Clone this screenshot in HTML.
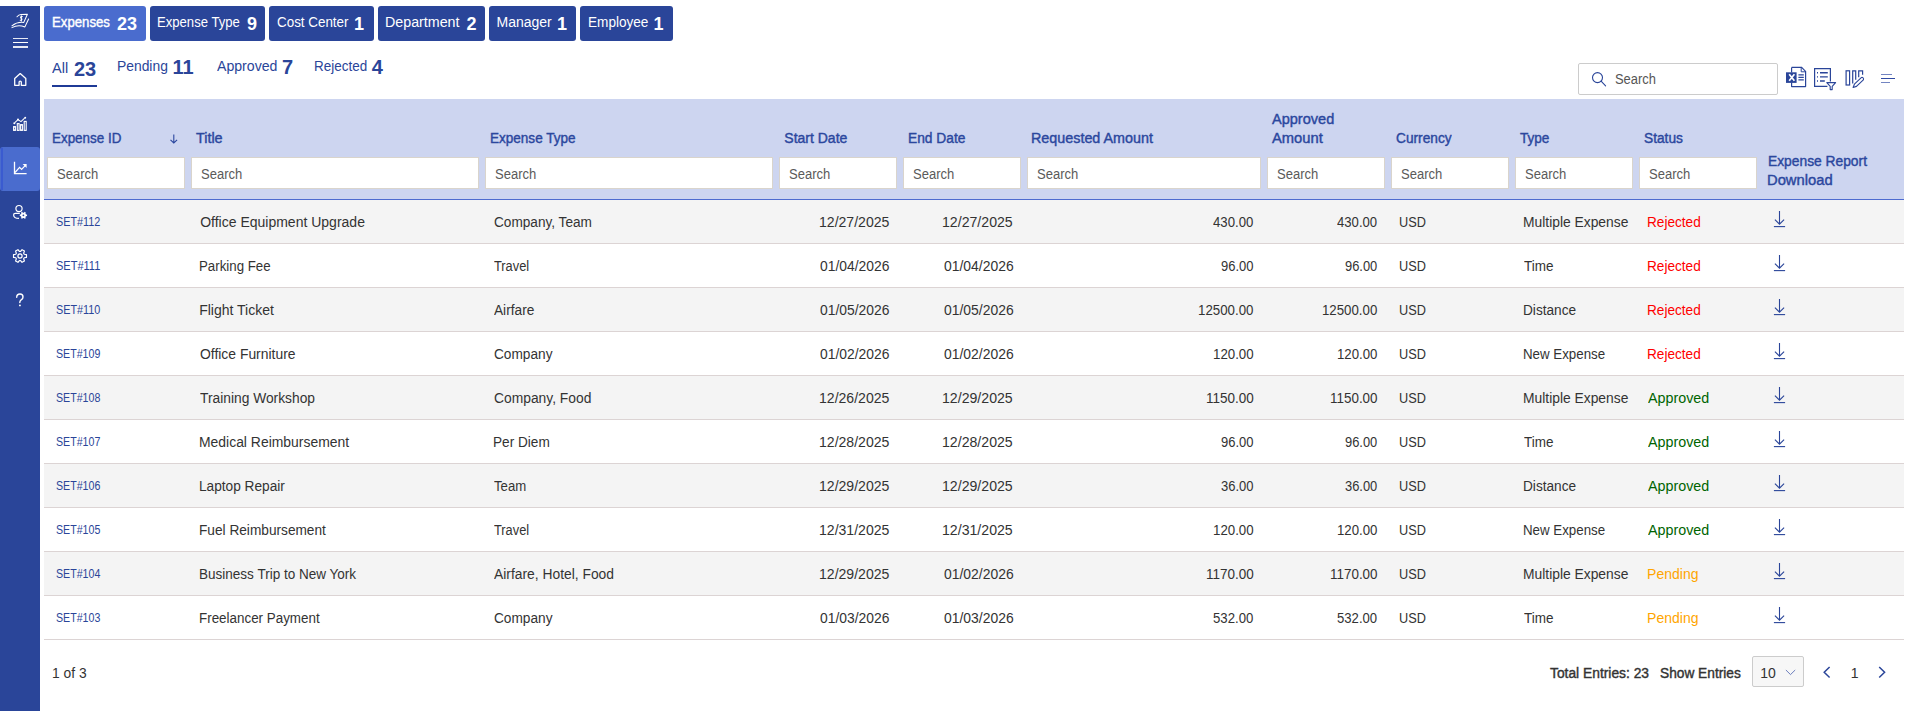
<!DOCTYPE html><html><head><meta charset="utf-8"><style>
*{box-sizing:border-box;margin:0;padding:0}
html,body{width:1905px;height:711px;overflow:hidden;background:#fff;font-family:"Liberation Sans",sans-serif;color:#333}
.t{position:absolute;line-height:1;white-space:nowrap}
.b{position:absolute}
</style></head><body><div class="b" style="left:0;top:6px;width:40px;height:705px;background:#2a4599"></div><div class="b" style="left:0;top:147px;width:40px;height:44px;background:#4a6cce;border-radius:3px"></div><div class="b" style="left:1px;top:148px;width:2px;height:42px;background:#3a5bd0"></div><div class="b" style="left:44px;top:6px;width:102px;height:35px;background:#4a6cce;border-radius:3px"></div><div class="t" style="left:51.76px;top:15.45px;font-size:14px;color:#fff;-webkit-text-stroke:0.4px #fff;transform:scaleX(0.9424);transform-origin:0 0;">Expenses</div><div class="t" style="left:117.09px;top:14.56px;font-size:18px;color:#fff;font-weight:bold;">23</div><div class="b" style="left:150px;top:6px;width:115px;height:35px;background:#2a4599;border-radius:3px"></div><div class="t" style="left:157.26px;top:15.45px;font-size:14px;color:#fff;transform:scaleX(0.9359);transform-origin:0 0;">Expense Type</div><div class="t" style="left:247.00px;top:14.56px;font-size:18px;color:#fff;font-weight:bold;">9</div><div class="b" style="left:269px;top:6px;width:105px;height:35px;background:#2a4599;border-radius:3px"></div><div class="t" style="left:277.40px;top:15.45px;font-size:14px;color:#fff;transform:scaleX(0.9569);transform-origin:0 0;">Cost Center</div><div class="t" style="left:354.00px;top:14.56px;font-size:18px;color:#fff;font-weight:bold;">1</div><div class="b" style="left:378px;top:6px;width:107px;height:35px;background:#2a4599;border-radius:3px"></div><div class="t" style="left:385.38px;top:15.45px;font-size:14px;color:#fff;transform:scaleX(1.0186);transform-origin:0 0;">Department</div><div class="t" style="left:466.40px;top:14.56px;font-size:18px;color:#fff;font-weight:bold;">2</div><div class="b" style="left:489px;top:6px;width:87px;height:35px;background:#2a4599;border-radius:3px"></div><div class="t" style="left:496.50px;top:15.45px;font-size:14px;color:#fff;">Manager</div><div class="t" style="left:557.10px;top:14.56px;font-size:18px;color:#fff;font-weight:bold;">1</div><div class="b" style="left:580px;top:6px;width:93px;height:35px;background:#2a4599;border-radius:3px"></div><div class="t" style="left:588.13px;top:15.45px;font-size:14px;color:#fff;transform:scaleX(0.9704);transform-origin:0 0;">Employee</div><div class="t" style="left:653.60px;top:14.56px;font-size:18px;color:#fff;font-weight:bold;">1</div><div class="t" style="left:52.20px;top:61.05px;font-size:14px;color:#2a4599;transform:scaleX(1.0357);transform-origin:0 0;">All</div><div class="t" style="left:73.88px;top:58.97px;font-size:20px;color:#2a4599;font-weight:bold;">23</div><div class="t" style="left:117.01px;top:59.15px;font-size:14px;color:#2a4599;transform:scaleX(0.9901);transform-origin:0 0;">Pending</div><div class="t" style="left:172.58px;top:57.07px;font-size:20px;color:#2a4599;font-weight:bold;">11</div><div class="t" style="left:216.80px;top:59.15px;font-size:14px;color:#2a4599;transform:scaleX(1.0077);transform-origin:0 0;">Approved</div><div class="t" style="left:281.90px;top:57.07px;font-size:20px;color:#2a4599;font-weight:bold;">7</div><div class="t" style="left:314.04px;top:59.15px;font-size:14px;color:#2a4599;transform:scaleX(0.9613);transform-origin:0 0;">Rejected</div><div class="t" style="left:371.70px;top:57.07px;font-size:20px;color:#2a4599;font-weight:bold;">4</div><div class="b" style="left:52px;top:85px;width:45px;height:2px;background:#1f3a96"></div><div class="b" style="left:1578px;top:63px;width:200px;height:32px;border:1px solid #cccccc;border-radius:2px;background:#fff"></div><svg class="b" style="left:1591px;top:72px" width="16" height="15" viewBox="0 0 16 15"><circle cx="6.5" cy="5.6" r="5" fill="none" stroke="#2a4599" stroke-width="1.1"/><line x1="10.1" y1="9.2" x2="14.6" y2="13.8" stroke="#2a4599" stroke-width="1.1" stroke-linecap="round"/></svg><div class="t" style="left:1615.30px;top:72.15px;font-size:14px;color:#555;transform:scaleX(0.9226);transform-origin:0 0;">Search</div><div class="b" style="left:44px;top:99px;width:1860px;height:100px;background:#cdd5f0"></div><div class="b" style="left:44px;top:199px;width:1860px;height:1px;background:#4d6bd0"></div><div class="b" style="left:47px;top:157px;width:138px;height:32px;background:#fff;border:1px solid #d9d4cc"></div><div class="t" style="left:56.50px;top:167.25px;font-size:14px;color:#5a5a5a;transform:scaleX(0.9295);transform-origin:0 0;">Search</div><div class="b" style="left:191px;top:157px;width:288px;height:32px;background:#fff;border:1px solid #d9d4cc"></div><div class="t" style="left:200.50px;top:167.25px;font-size:14px;color:#5a5a5a;transform:scaleX(0.9295);transform-origin:0 0;">Search</div><div class="b" style="left:485px;top:157px;width:288px;height:32px;background:#fff;border:1px solid #d9d4cc"></div><div class="t" style="left:494.50px;top:167.25px;font-size:14px;color:#5a5a5a;transform:scaleX(0.9295);transform-origin:0 0;">Search</div><div class="b" style="left:779px;top:157px;width:118px;height:32px;background:#fff;border:1px solid #d9d4cc"></div><div class="t" style="left:788.50px;top:167.25px;font-size:14px;color:#5a5a5a;transform:scaleX(0.9295);transform-origin:0 0;">Search</div><div class="b" style="left:903px;top:157px;width:118px;height:32px;background:#fff;border:1px solid #d9d4cc"></div><div class="t" style="left:912.50px;top:167.25px;font-size:14px;color:#5a5a5a;transform:scaleX(0.9295);transform-origin:0 0;">Search</div><div class="b" style="left:1027px;top:157px;width:234px;height:32px;background:#fff;border:1px solid #d9d4cc"></div><div class="t" style="left:1036.50px;top:167.25px;font-size:14px;color:#5a5a5a;transform:scaleX(0.9295);transform-origin:0 0;">Search</div><div class="b" style="left:1267px;top:157px;width:118px;height:32px;background:#fff;border:1px solid #d9d4cc"></div><div class="t" style="left:1276.50px;top:167.25px;font-size:14px;color:#5a5a5a;transform:scaleX(0.9295);transform-origin:0 0;">Search</div><div class="b" style="left:1391px;top:157px;width:118px;height:32px;background:#fff;border:1px solid #d9d4cc"></div><div class="t" style="left:1400.50px;top:167.25px;font-size:14px;color:#5a5a5a;transform:scaleX(0.9295);transform-origin:0 0;">Search</div><div class="b" style="left:1515px;top:157px;width:118px;height:32px;background:#fff;border:1px solid #d9d4cc"></div><div class="t" style="left:1524.50px;top:167.25px;font-size:14px;color:#5a5a5a;transform:scaleX(0.9295);transform-origin:0 0;">Search</div><div class="b" style="left:1639px;top:157px;width:118px;height:32px;background:#fff;border:1px solid #d9d4cc"></div><div class="t" style="left:1648.50px;top:167.25px;font-size:14px;color:#5a5a5a;transform:scaleX(0.9295);transform-origin:0 0;">Search</div><div class="t" style="left:51.94px;top:130.95px;font-size:14px;color:#2b479e;-webkit-text-stroke:0.4px #2b479e;transform:scaleX(0.9584);transform-origin:0 0;">Expense ID</div><div class="t" style="left:196.20px;top:130.95px;font-size:14px;color:#2b479e;-webkit-text-stroke:0.4px #2b479e;transform:scaleX(1.0251);transform-origin:0 0;">Title</div><div class="t" style="left:489.53px;top:130.95px;font-size:14px;color:#2b479e;-webkit-text-stroke:0.4px #2b479e;transform:scaleX(0.9666);transform-origin:0 0;">Expense Type</div><div class="t" style="left:784.30px;top:130.95px;font-size:14px;color:#2b479e;-webkit-text-stroke:0.4px #2b479e;">Start Date</div><div class="t" style="left:907.62px;top:130.95px;font-size:14px;color:#2b479e;-webkit-text-stroke:0.4px #2b479e;transform:scaleX(0.9846);transform-origin:0 0;">End Date</div><div class="t" style="left:1031.48px;top:130.95px;font-size:14px;color:#2b479e;-webkit-text-stroke:0.4px #2b479e;transform:scaleX(1.0238);transform-origin:0 0;">Requested Amount</div><div class="t" style="left:1272.40px;top:112.05px;font-size:14px;color:#2b479e;-webkit-text-stroke:0.4px #2b479e;transform:scaleX(1.0381);transform-origin:0 0;">Approved</div><div class="t" style="left:1272.40px;top:131.05px;font-size:14px;color:#2b479e;-webkit-text-stroke:0.4px #2b479e;transform:scaleX(1.0526);transform-origin:0 0;">Amount</div><div class="t" style="left:1396.40px;top:130.95px;font-size:14px;color:#2b479e;-webkit-text-stroke:0.4px #2b479e;transform:scaleX(0.9790);transform-origin:0 0;">Currency</div><div class="t" style="left:1520.10px;top:130.95px;font-size:14px;color:#2b479e;-webkit-text-stroke:0.4px #2b479e;transform:scaleX(0.9684);transform-origin:0 0;">Type</div><div class="t" style="left:1644.10px;top:130.95px;font-size:14px;color:#2b479e;-webkit-text-stroke:0.4px #2b479e;transform:scaleX(0.9801);transform-origin:0 0;">Status</div><div class="t" style="left:1767.51px;top:154.15px;font-size:14px;color:#2b479e;-webkit-text-stroke:0.4px #2b479e;transform:scaleX(0.9859);transform-origin:0 0;">Expense Report</div><div class="t" style="left:1767.45px;top:172.95px;font-size:14px;color:#2b479e;-webkit-text-stroke:0.4px #2b479e;transform:scaleX(1.0533);transform-origin:0 0;">Download</div><svg class="b" style="left:169px;top:134px" width="10" height="10" viewBox="0 0 10 10"><path d="M4.8 0.5V9 M1.5 5.8 L4.8 9 L8.1 5.8" fill="none" stroke="#2b479e" stroke-width="1.1"/></svg><div class="b" style="left:44px;top:200px;width:1860px;height:43px;background:#f4f4f4"></div><div class="b" style="left:44px;top:243px;width:1860px;height:1px;background:#dcd4d4"></div><div class="t" style="left:56.40px;top:215.74px;font-size:12px;color:#2a4599;transform:scaleX(0.9016);transform-origin:0 0;">SET#112</div><div class="t" style="left:200.20px;top:215.15px;font-size:14px;color:#333;">Office Equipment Upgrade</div><div class="t" style="left:494.30px;top:215.15px;font-size:14px;color:#333;transform:scaleX(0.9728);transform-origin:0 0;">Company, Team</div><div class="t" style="left:818.70px;top:215.15px;font-size:14px;color:#333;transform:scaleX(1.0046);transform-origin:0 0;">12/27/2025</div><div class="t" style="left:942.49px;top:215.15px;font-size:14px;color:#333;transform:scaleX(1.0089);transform-origin:0 0;">12/27/2025</div><div class="t" style="left:1213.40px;top:215.15px;font-size:14px;color:#333;transform:scaleX(0.9411);transform-origin:0 0;">430.00</div><div class="t" style="left:1337.40px;top:215.15px;font-size:14px;color:#333;transform:scaleX(0.9365);transform-origin:0 0;">430.00</div><div class="t" style="left:1399.29px;top:215.15px;font-size:14px;color:#333;transform:scaleX(0.9104);transform-origin:0 0;">USD</div><div class="t" style="left:1523.31px;top:215.15px;font-size:14px;color:#333;transform:scaleX(0.9884);transform-origin:0 0;">Multiple Expense</div><div class="t" style="left:1647.13px;top:215.15px;font-size:14px;color:#ff0000;transform:scaleX(0.9725);transform-origin:0 0;">Rejected</div><svg class="b" style="left:1768px;top:205px" width="24" height="28" viewBox="0 0 24 28"><path d="M11.5 6V19 M6.9 14.6 L11.5 19.2 L16.1 14.6" fill="none" stroke="#2a4599" stroke-width="1.1"/><path d="M5.9 21.6H17.1" stroke="#2a4599" stroke-width="1.1"/></svg><div class="b" style="left:44px;top:244px;width:1860px;height:43px;background:#fff"></div><div class="b" style="left:44px;top:287px;width:1860px;height:1px;background:#dcd4d4"></div><div class="t" style="left:56.40px;top:259.74px;font-size:12px;color:#2a4599;transform:scaleX(0.9181);transform-origin:0 0;">SET#111</div><div class="t" style="left:199.25px;top:259.15px;font-size:14px;color:#333;transform:scaleX(0.9492);transform-origin:0 0;">Parking Fee</div><div class="t" style="left:494.30px;top:259.15px;font-size:14px;color:#333;transform:scaleX(0.9146);transform-origin:0 0;">Travel</div><div class="t" style="left:819.70px;top:259.15px;font-size:14px;color:#333;transform:scaleX(0.9903);transform-origin:0 0;">01/04/2026</div><div class="t" style="left:943.50px;top:259.15px;font-size:14px;color:#333;transform:scaleX(0.9946);transform-origin:0 0;">01/04/2026</div><div class="t" style="left:1221.20px;top:259.15px;font-size:14px;color:#333;transform:scaleX(0.9277);transform-origin:0 0;">96.00</div><div class="t" style="left:1345.20px;top:259.15px;font-size:14px;color:#333;transform:scaleX(0.9220);transform-origin:0 0;">96.00</div><div class="t" style="left:1399.29px;top:259.15px;font-size:14px;color:#333;transform:scaleX(0.9104);transform-origin:0 0;">USD</div><div class="t" style="left:1524.30px;top:259.15px;font-size:14px;color:#333;transform:scaleX(0.9641);transform-origin:0 0;">Time</div><div class="t" style="left:1647.13px;top:259.15px;font-size:14px;color:#ff0000;transform:scaleX(0.9725);transform-origin:0 0;">Rejected</div><svg class="b" style="left:1768px;top:249px" width="24" height="28" viewBox="0 0 24 28"><path d="M11.5 6V19 M6.9 14.6 L11.5 19.2 L16.1 14.6" fill="none" stroke="#2a4599" stroke-width="1.1"/><path d="M5.9 21.6H17.1" stroke="#2a4599" stroke-width="1.1"/></svg><div class="b" style="left:44px;top:288px;width:1860px;height:43px;background:#f4f4f4"></div><div class="b" style="left:44px;top:331px;width:1860px;height:1px;background:#dcd4d4"></div><div class="t" style="left:56.40px;top:303.74px;font-size:12px;color:#2a4599;transform:scaleX(0.9016);transform-origin:0 0;">SET#110</div><div class="t" style="left:199.20px;top:303.15px;font-size:14px;color:#333;">Flight Ticket</div><div class="t" style="left:494.30px;top:303.15px;font-size:14px;color:#333;transform:scaleX(0.9771);transform-origin:0 0;">Airfare</div><div class="t" style="left:819.70px;top:303.15px;font-size:14px;color:#333;transform:scaleX(0.9903);transform-origin:0 0;">01/05/2026</div><div class="t" style="left:943.50px;top:303.15px;font-size:14px;color:#333;transform:scaleX(0.9946);transform-origin:0 0;">01/05/2026</div><div class="t" style="left:1198.25px;top:303.15px;font-size:14px;color:#333;transform:scaleX(0.9495);transform-origin:0 0;">12500.00</div><div class="t" style="left:1322.25px;top:303.15px;font-size:14px;color:#333;transform:scaleX(0.9461);transform-origin:0 0;">12500.00</div><div class="t" style="left:1399.29px;top:303.15px;font-size:14px;color:#333;transform:scaleX(0.9104);transform-origin:0 0;">USD</div><div class="t" style="left:1523.33px;top:303.15px;font-size:14px;color:#333;transform:scaleX(0.9742);transform-origin:0 0;">Distance</div><div class="t" style="left:1647.13px;top:303.15px;font-size:14px;color:#ff0000;transform:scaleX(0.9725);transform-origin:0 0;">Rejected</div><svg class="b" style="left:1768px;top:293px" width="24" height="28" viewBox="0 0 24 28"><path d="M11.5 6V19 M6.9 14.6 L11.5 19.2 L16.1 14.6" fill="none" stroke="#2a4599" stroke-width="1.1"/><path d="M5.9 21.6H17.1" stroke="#2a4599" stroke-width="1.1"/></svg><div class="b" style="left:44px;top:332px;width:1860px;height:43px;background:#fff"></div><div class="b" style="left:44px;top:375px;width:1860px;height:1px;background:#dcd4d4"></div><div class="t" style="left:56.40px;top:347.74px;font-size:12px;color:#2a4599;transform:scaleX(0.8856);transform-origin:0 0;">SET#109</div><div class="t" style="left:200.20px;top:347.15px;font-size:14px;color:#333;transform:scaleX(0.9924);transform-origin:0 0;">Office Furniture</div><div class="t" style="left:494.30px;top:347.15px;font-size:14px;color:#333;transform:scaleX(0.9764);transform-origin:0 0;">Company</div><div class="t" style="left:819.70px;top:347.15px;font-size:14px;color:#333;transform:scaleX(0.9903);transform-origin:0 0;">01/02/2026</div><div class="t" style="left:943.50px;top:347.15px;font-size:14px;color:#333;transform:scaleX(0.9946);transform-origin:0 0;">01/02/2026</div><div class="t" style="left:1213.05px;top:347.15px;font-size:14px;color:#333;transform:scaleX(0.9492);transform-origin:0 0;">120.00</div><div class="t" style="left:1337.06px;top:347.15px;font-size:14px;color:#333;transform:scaleX(0.9445);transform-origin:0 0;">120.00</div><div class="t" style="left:1399.29px;top:347.15px;font-size:14px;color:#333;transform:scaleX(0.9104);transform-origin:0 0;">USD</div><div class="t" style="left:1523.35px;top:347.15px;font-size:14px;color:#333;transform:scaleX(0.9510);transform-origin:0 0;">New Expense</div><div class="t" style="left:1647.13px;top:347.15px;font-size:14px;color:#ff0000;transform:scaleX(0.9725);transform-origin:0 0;">Rejected</div><svg class="b" style="left:1768px;top:337px" width="24" height="28" viewBox="0 0 24 28"><path d="M11.5 6V19 M6.9 14.6 L11.5 19.2 L16.1 14.6" fill="none" stroke="#2a4599" stroke-width="1.1"/><path d="M5.9 21.6H17.1" stroke="#2a4599" stroke-width="1.1"/></svg><div class="b" style="left:44px;top:376px;width:1860px;height:43px;background:#f4f4f4"></div><div class="b" style="left:44px;top:419px;width:1860px;height:1px;background:#dcd4d4"></div><div class="t" style="left:56.40px;top:391.74px;font-size:12px;color:#2a4599;transform:scaleX(0.8856);transform-origin:0 0;">SET#108</div><div class="t" style="left:200.20px;top:391.15px;font-size:14px;color:#333;transform:scaleX(0.9852);transform-origin:0 0;">Training Workshop</div><div class="t" style="left:494.30px;top:391.15px;font-size:14px;color:#333;transform:scaleX(0.9879);transform-origin:0 0;">Company, Food</div><div class="t" style="left:818.70px;top:391.15px;font-size:14px;color:#333;transform:scaleX(1.0046);transform-origin:0 0;">12/26/2025</div><div class="t" style="left:942.49px;top:391.15px;font-size:14px;color:#333;transform:scaleX(1.0089);transform-origin:0 0;">12/29/2025</div><div class="t" style="left:1205.94px;top:391.15px;font-size:14px;color:#333;transform:scaleX(0.9635);transform-origin:0 0;">1150.00</div><div class="t" style="left:1329.94px;top:391.15px;font-size:14px;color:#333;transform:scaleX(0.9594);transform-origin:0 0;">1150.00</div><div class="t" style="left:1399.29px;top:391.15px;font-size:14px;color:#333;transform:scaleX(0.9104);transform-origin:0 0;">USD</div><div class="t" style="left:1523.31px;top:391.15px;font-size:14px;color:#333;transform:scaleX(0.9884);transform-origin:0 0;">Multiple Expense</div><div class="t" style="left:1648.10px;top:391.15px;font-size:14px;color:#006400;transform:scaleX(1.0212);transform-origin:0 0;">Approved</div><svg class="b" style="left:1768px;top:381px" width="24" height="28" viewBox="0 0 24 28"><path d="M11.5 6V19 M6.9 14.6 L11.5 19.2 L16.1 14.6" fill="none" stroke="#2a4599" stroke-width="1.1"/><path d="M5.9 21.6H17.1" stroke="#2a4599" stroke-width="1.1"/></svg><div class="b" style="left:44px;top:420px;width:1860px;height:43px;background:#fff"></div><div class="b" style="left:44px;top:463px;width:1860px;height:1px;background:#dcd4d4"></div><div class="t" style="left:56.40px;top:435.74px;font-size:12px;color:#2a4599;transform:scaleX(0.8856);transform-origin:0 0;">SET#107</div><div class="t" style="left:199.21px;top:435.15px;font-size:14px;color:#333;transform:scaleX(0.9943);transform-origin:0 0;">Medical Reimbursement</div><div class="t" style="left:493.33px;top:435.15px;font-size:14px;color:#333;transform:scaleX(0.9721);transform-origin:0 0;">Per Diem</div><div class="t" style="left:818.70px;top:435.15px;font-size:14px;color:#333;transform:scaleX(1.0046);transform-origin:0 0;">12/28/2025</div><div class="t" style="left:942.49px;top:435.15px;font-size:14px;color:#333;transform:scaleX(1.0089);transform-origin:0 0;">12/28/2025</div><div class="t" style="left:1221.20px;top:435.15px;font-size:14px;color:#333;transform:scaleX(0.9277);transform-origin:0 0;">96.00</div><div class="t" style="left:1345.20px;top:435.15px;font-size:14px;color:#333;transform:scaleX(0.9220);transform-origin:0 0;">96.00</div><div class="t" style="left:1399.29px;top:435.15px;font-size:14px;color:#333;transform:scaleX(0.9104);transform-origin:0 0;">USD</div><div class="t" style="left:1524.30px;top:435.15px;font-size:14px;color:#333;transform:scaleX(0.9641);transform-origin:0 0;">Time</div><div class="t" style="left:1648.10px;top:435.15px;font-size:14px;color:#006400;transform:scaleX(1.0212);transform-origin:0 0;">Approved</div><svg class="b" style="left:1768px;top:425px" width="24" height="28" viewBox="0 0 24 28"><path d="M11.5 6V19 M6.9 14.6 L11.5 19.2 L16.1 14.6" fill="none" stroke="#2a4599" stroke-width="1.1"/><path d="M5.9 21.6H17.1" stroke="#2a4599" stroke-width="1.1"/></svg><div class="b" style="left:44px;top:464px;width:1860px;height:43px;background:#f4f4f4"></div><div class="b" style="left:44px;top:507px;width:1860px;height:1px;background:#dcd4d4"></div><div class="t" style="left:56.40px;top:479.74px;font-size:12px;color:#2a4599;transform:scaleX(0.8856);transform-origin:0 0;">SET#106</div><div class="t" style="left:199.22px;top:479.15px;font-size:14px;color:#333;transform:scaleX(0.9761);transform-origin:0 0;">Laptop Repair</div><div class="t" style="left:494.30px;top:479.15px;font-size:14px;color:#333;transform:scaleX(0.9413);transform-origin:0 0;">Team</div><div class="t" style="left:818.70px;top:479.15px;font-size:14px;color:#333;transform:scaleX(1.0046);transform-origin:0 0;">12/29/2025</div><div class="t" style="left:942.49px;top:479.15px;font-size:14px;color:#333;transform:scaleX(1.0089);transform-origin:0 0;">12/29/2025</div><div class="t" style="left:1221.20px;top:479.15px;font-size:14px;color:#333;transform:scaleX(0.9277);transform-origin:0 0;">36.00</div><div class="t" style="left:1345.20px;top:479.15px;font-size:14px;color:#333;transform:scaleX(0.9220);transform-origin:0 0;">36.00</div><div class="t" style="left:1399.29px;top:479.15px;font-size:14px;color:#333;transform:scaleX(0.9104);transform-origin:0 0;">USD</div><div class="t" style="left:1523.33px;top:479.15px;font-size:14px;color:#333;transform:scaleX(0.9742);transform-origin:0 0;">Distance</div><div class="t" style="left:1648.10px;top:479.15px;font-size:14px;color:#006400;transform:scaleX(1.0212);transform-origin:0 0;">Approved</div><svg class="b" style="left:1768px;top:469px" width="24" height="28" viewBox="0 0 24 28"><path d="M11.5 6V19 M6.9 14.6 L11.5 19.2 L16.1 14.6" fill="none" stroke="#2a4599" stroke-width="1.1"/><path d="M5.9 21.6H17.1" stroke="#2a4599" stroke-width="1.1"/></svg><div class="b" style="left:44px;top:508px;width:1860px;height:43px;background:#fff"></div><div class="b" style="left:44px;top:551px;width:1860px;height:1px;background:#dcd4d4"></div><div class="t" style="left:56.40px;top:523.74px;font-size:12px;color:#2a4599;transform:scaleX(0.8856);transform-origin:0 0;">SET#105</div><div class="t" style="left:199.22px;top:523.15px;font-size:14px;color:#333;transform:scaleX(0.9764);transform-origin:0 0;">Fuel Reimbursement</div><div class="t" style="left:494.30px;top:523.15px;font-size:14px;color:#333;transform:scaleX(0.9146);transform-origin:0 0;">Travel</div><div class="t" style="left:818.70px;top:523.15px;font-size:14px;color:#333;transform:scaleX(1.0046);transform-origin:0 0;">12/31/2025</div><div class="t" style="left:942.49px;top:523.15px;font-size:14px;color:#333;transform:scaleX(1.0089);transform-origin:0 0;">12/31/2025</div><div class="t" style="left:1213.05px;top:523.15px;font-size:14px;color:#333;transform:scaleX(0.9492);transform-origin:0 0;">120.00</div><div class="t" style="left:1337.06px;top:523.15px;font-size:14px;color:#333;transform:scaleX(0.9445);transform-origin:0 0;">120.00</div><div class="t" style="left:1399.29px;top:523.15px;font-size:14px;color:#333;transform:scaleX(0.9104);transform-origin:0 0;">USD</div><div class="t" style="left:1523.35px;top:523.15px;font-size:14px;color:#333;transform:scaleX(0.9510);transform-origin:0 0;">New Expense</div><div class="t" style="left:1648.10px;top:523.15px;font-size:14px;color:#006400;transform:scaleX(1.0212);transform-origin:0 0;">Approved</div><svg class="b" style="left:1768px;top:513px" width="24" height="28" viewBox="0 0 24 28"><path d="M11.5 6V19 M6.9 14.6 L11.5 19.2 L16.1 14.6" fill="none" stroke="#2a4599" stroke-width="1.1"/><path d="M5.9 21.6H17.1" stroke="#2a4599" stroke-width="1.1"/></svg><div class="b" style="left:44px;top:552px;width:1860px;height:43px;background:#f4f4f4"></div><div class="b" style="left:44px;top:595px;width:1860px;height:1px;background:#dcd4d4"></div><div class="t" style="left:56.40px;top:567.74px;font-size:12px;color:#2a4599;transform:scaleX(0.8856);transform-origin:0 0;">SET#104</div><div class="t" style="left:199.23px;top:567.15px;font-size:14px;color:#333;transform:scaleX(0.9660);transform-origin:0 0;">Business Trip to New York</div><div class="t" style="left:494.30px;top:567.15px;font-size:14px;color:#333;transform:scaleX(0.9884);transform-origin:0 0;">Airfare, Hotel, Food</div><div class="t" style="left:818.70px;top:567.15px;font-size:14px;color:#333;transform:scaleX(1.0046);transform-origin:0 0;">12/29/2025</div><div class="t" style="left:943.50px;top:567.15px;font-size:14px;color:#333;transform:scaleX(0.9946);transform-origin:0 0;">01/02/2026</div><div class="t" style="left:1205.94px;top:567.15px;font-size:14px;color:#333;transform:scaleX(0.9635);transform-origin:0 0;">1170.00</div><div class="t" style="left:1329.94px;top:567.15px;font-size:14px;color:#333;transform:scaleX(0.9594);transform-origin:0 0;">1170.00</div><div class="t" style="left:1399.29px;top:567.15px;font-size:14px;color:#333;transform:scaleX(0.9104);transform-origin:0 0;">USD</div><div class="t" style="left:1523.31px;top:567.15px;font-size:14px;color:#333;transform:scaleX(0.9884);transform-origin:0 0;">Multiple Expense</div><div class="t" style="left:1647.10px;top:567.15px;font-size:14px;color:#ffa500;">Pending</div><svg class="b" style="left:1768px;top:557px" width="24" height="28" viewBox="0 0 24 28"><path d="M11.5 6V19 M6.9 14.6 L11.5 19.2 L16.1 14.6" fill="none" stroke="#2a4599" stroke-width="1.1"/><path d="M5.9 21.6H17.1" stroke="#2a4599" stroke-width="1.1"/></svg><div class="b" style="left:44px;top:596px;width:1860px;height:43px;background:#fff"></div><div class="b" style="left:44px;top:639px;width:1860px;height:1px;background:#dcd4d4"></div><div class="t" style="left:56.40px;top:611.74px;font-size:12px;color:#2a4599;transform:scaleX(0.8856);transform-origin:0 0;">SET#103</div><div class="t" style="left:199.24px;top:611.15px;font-size:14px;color:#333;transform:scaleX(0.9571);transform-origin:0 0;">Freelancer Payment</div><div class="t" style="left:494.30px;top:611.15px;font-size:14px;color:#333;transform:scaleX(0.9764);transform-origin:0 0;">Company</div><div class="t" style="left:819.70px;top:611.15px;font-size:14px;color:#333;transform:scaleX(0.9903);transform-origin:0 0;">01/03/2026</div><div class="t" style="left:943.50px;top:611.15px;font-size:14px;color:#333;transform:scaleX(0.9946);transform-origin:0 0;">01/03/2026</div><div class="t" style="left:1213.40px;top:611.15px;font-size:14px;color:#333;transform:scaleX(0.9411);transform-origin:0 0;">532.00</div><div class="t" style="left:1337.40px;top:611.15px;font-size:14px;color:#333;transform:scaleX(0.9365);transform-origin:0 0;">532.00</div><div class="t" style="left:1399.29px;top:611.15px;font-size:14px;color:#333;transform:scaleX(0.9104);transform-origin:0 0;">USD</div><div class="t" style="left:1524.30px;top:611.15px;font-size:14px;color:#333;transform:scaleX(0.9641);transform-origin:0 0;">Time</div><div class="t" style="left:1647.10px;top:611.15px;font-size:14px;color:#ffa500;">Pending</div><svg class="b" style="left:1768px;top:601px" width="24" height="28" viewBox="0 0 24 28"><path d="M11.5 6V19 M6.9 14.6 L11.5 19.2 L16.1 14.6" fill="none" stroke="#2a4599" stroke-width="1.1"/><path d="M5.9 21.6H17.1" stroke="#2a4599" stroke-width="1.1"/></svg><div class="t" style="left:51.91px;top:666.05px;font-size:14px;color:#333;transform:scaleX(0.9871);transform-origin:0 0;">1 of 3</div><div class="t" style="left:1550.00px;top:666.25px;font-size:14px;color:#333;-webkit-text-stroke:0.4px #333;transform:scaleX(0.9861);transform-origin:0 0;">Total Entries: 23</div><div class="t" style="left:1660.20px;top:666.25px;font-size:14px;color:#333;-webkit-text-stroke:0.4px #333;transform:scaleX(0.9796);transform-origin:0 0;">Show Entries</div><div class="b" style="left:1751.5px;top:656.3px;width:52.2px;height:31.2px;background:#f7f7f7;border:1px solid #cccccc;border-radius:2px"></div><div class="t" style="left:1760.30px;top:665.65px;font-size:14px;color:#333;">10</div><svg class="b" style="left:8px;top:10px" width="24" height="20" viewBox="0 0 24 20"><g fill="none" stroke="#fff" stroke-width="1.05" stroke-linecap="round" stroke-linejoin="round"><path d="M9 6.8 Q10.8 4.5 13 4.4 L19.4 4.3 L15.8 12.4 Q9.5 11.4 3.9 15.8"/><path d="M20.6 9 L16.9 16.9 Q10 14.4 3.9 17.6"/><path d="M14.3 6.6 Q12.3 6.4 12.6 7.8 Q13 8.6 13.8 8.8 Q14.6 9.8 12.2 10.2 M13.4 5.7 V11"/></g></svg><div class="b" style="left:13px;top:37.7px;width:14.5px;height:1.6px;background:#e6e9f4"></div><div class="b" style="left:13px;top:41.8px;width:14.5px;height:1.5px;background:#fff"></div><div class="b" style="left:13px;top:46px;width:14.5px;height:1.6px;background:#e6e9f4"></div><svg class="b" style="left:8px;top:68px" width="24" height="24" viewBox="0 0 24 24"><path d="M6.7 17.3 V10.6 L12.2 5.6 L17.8 10.6 V17.3 H13.3 V14 Q13.3 13.1 12.2 13.1 Q11.1 13.1 11.1 14 V17.3 Z" fill="none" stroke="#fff" stroke-width="1.3" stroke-linejoin="round"/></svg><svg class="b" style="left:8px;top:112px" width="24" height="24" viewBox="0 0 24 24"><g fill="none" stroke="#fff" stroke-width="1.1"><rect x="5.6" y="14.6" width="1.8" height="3.8"/><rect x="9.3" y="11.6" width="1.8" height="6.8"/><rect x="12.6" y="12.6" width="1.8" height="5.8"/><rect x="16.2" y="9.4" width="2" height="9"/><path d="M6.8 10.6 L10 7.6 L13 9.6 L16.6 6.2"/></g><circle cx="6.3" cy="11.2" r="1" fill="#fff"/><circle cx="10" cy="7.5" r="1" fill="#fff"/><circle cx="17.2" cy="5.8" r="1" fill="#fff"/></svg><svg class="b" style="left:8px;top:156px" width="24" height="24" viewBox="0 0 24 24"><path d="M6.5 5.8 V17.7 H18.6" fill="none" stroke="#fff" stroke-width="1.3"/><path d="M7 16.5 L11.6 11.4 L13.6 13.4 L17.4 9.4" fill="none" stroke="#fff" stroke-width="1.2"/><path d="M14.6 8 H18.6 V12 Z" fill="#fff"/></svg><svg class="b" style="left:8px;top:200px" width="24" height="24" viewBox="0 0 24 24"><circle cx="11" cy="8.6" r="3.1" fill="none" stroke="#fff" stroke-width="1.2"/><path d="M11.8 13.3 H7.3 Q5.6 13.3 5.6 15 Q5.8 18.4 11 18.4" fill="none" stroke="#fff" stroke-width="1.2"/><path d="M17.93 14.35 L19.05 14.71 L19.05 15.89 L17.93 16.25 L17.48 17.02 L17.74 18.17 L16.72 18.76 L15.85 17.96 L14.95 17.96 L14.08 18.76 L13.06 18.17 L13.32 17.02 L12.87 16.25 L11.75 15.89 L11.75 14.71 L12.87 14.35 L13.32 13.58 L13.06 12.43 L14.08 11.84 L14.95 12.64 L15.85 12.64 L16.72 11.84 L17.74 12.43 L17.48 13.58 Z" fill="#fff"/><circle cx="15.4" cy="15.3" r="0.9" fill="#2a4599"/></svg><svg class="b" style="left:8px;top:244px" width="24" height="24" viewBox="0 0 24 24"><path d="M16.26 10.26 L18.46 10.62 L18.46 13.38 L16.26 13.74 L15.64 14.82 L16.42 16.90 L14.04 18.28 L12.62 16.56 L11.38 16.56 L9.96 18.28 L7.58 16.90 L8.36 14.82 L7.74 13.74 L5.54 13.38 L5.54 10.62 L7.74 10.26 L8.36 9.18 L7.58 7.10 L9.96 5.72 L11.38 7.44 L12.62 7.44 L14.04 5.72 L16.42 7.10 L15.64 9.18 Z" fill="none" stroke="#fff" stroke-width="1.2" stroke-linejoin="round"/><circle cx="12" cy="12" r="2.1" fill="none" stroke="#fff" stroke-width="1.2"/></svg><svg class="b" style="left:8px;top:288px" width="24" height="24" viewBox="0 0 24 24"><path d="M8.7 9.3 Q8.7 6 12 6 Q15 6 15 8.9 Q15 10.6 13.2 11.8 Q11.8 12.8 11.8 14.6" fill="none" stroke="#fff" stroke-width="1.4" stroke-linecap="round"/><circle cx="11.9" cy="17.4" r="0.95" fill="#fff"/></svg><svg class="b" style="left:1784px;top:65px" width="24" height="24" viewBox="0 0 24 24"><path d="M7.6 2.4 H17.6 L21.6 6.4 V21.4 Q21.6 21.6 21.4 21.6 H7.8 Q7.6 21.6 7.6 21.4 V17.6 M7.6 7.6 V2.6" fill="none" stroke="#2a4599" stroke-width="1.2"/><path d="M17.2 2.4 V6.8 H21.6" fill="none" stroke="#2a4599" stroke-width="1"/><rect x="2" y="7.3" width="10.6" height="10.6" fill="#2a4599"/><path d="M5.2 9.3 L10.4 15.7 M10.4 9.3 L5.2 15.7" stroke="#fff" stroke-width="1.7"/><path d="M14.4 9.9 H19.8 M14.4 12.4 H19.8 M14.4 14.9 H19.8" stroke="#2a4599" stroke-width="1.4"/></svg><svg class="b" style="left:1812px;top:66px" width="26" height="26" viewBox="0 0 26 26"><path d="M15.4 20.4 H2.6 V2.7 H18.4 V15.4" fill="none" stroke="#2a4599" stroke-width="1.2"/><path d="M5 6.8 H6 M5 10.9 H6 M5 15 H6" stroke="#2a4599" stroke-width="1.4"/><path d="M8 6.8 H15.8 M8 10.9 H15.8 M8 15 H12.8" stroke="#2a4599" stroke-width="1.4"/><path d="M14.8 16.6 H23.6 L20.2 20.4 V23.6 H18.2 V20.4 Z" fill="none" stroke="#2a4599" stroke-width="1.1" stroke-linejoin="round"/></svg><svg class="b" style="left:1843px;top:68px" width="24" height="24" viewBox="0 0 24 24"><rect x="3.1" y="2.8" width="3.5" height="14.2" fill="none" stroke="#2a4599" stroke-width="1.2"/><path d="M9.7 15.5 V2.8 H12.7 V11.7" fill="none" stroke="#2a4599" stroke-width="1.2"/><path d="M15.7 9.2 V2.8 H19.6 V6.8" fill="none" stroke="#2a4599" stroke-width="1.2"/><path d="M10.1 19.5 L13.46 18.39 L20.33 11.89 Q21 10.6 19.9 9.6 Q18.9 9 18.27 9.71 L11.4 16.21 Z" fill="none" stroke="#2a4599" stroke-width="1.1" stroke-linejoin="round"/></svg><div class="b" style="left:1881px;top:73.8px;width:10.5px;height:1.2px;background:#7385c2"></div><div class="b" style="left:1881px;top:77.9px;width:14px;height:1.1px;background:#2f4aa3"></div><div class="b" style="left:1881px;top:82.2px;width:8.6px;height:1.2px;background:#7385c2"></div><svg class="b" style="left:1780px;top:664px" width="20" height="14" viewBox="0 0 20 14"><path d="M5.9 6 L10.5 10.6 L15.2 6" fill="none" stroke="#5a6fb5" stroke-width="0.9"/></svg><svg class="b" style="left:1818px;top:662px" width="16" height="20" viewBox="0 0 16 20"><path d="M11.6 5 L6.2 10.3 L11.6 15.5" fill="none" stroke="#2a4599" stroke-width="1.5"/></svg><svg class="b" style="left:1874px;top:662px" width="16" height="20" viewBox="0 0 16 20"><path d="M5.2 5 L10.6 10.3 L5.2 15.5" fill="none" stroke="#2a4599" stroke-width="1.5"/></svg><div class="t" style="left:1850.70px;top:665.85px;font-size:14px;color:#333;">1</div></body></html>
